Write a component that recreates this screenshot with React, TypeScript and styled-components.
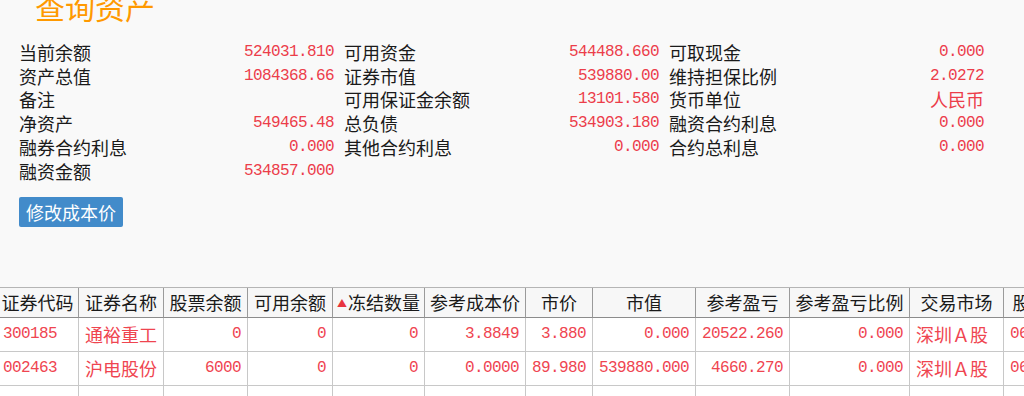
import React from "react";
import styled, { createGlobalStyle } from "styled-components";

interface InfoItem {
  label: string;
  value: string;
  cjk?: boolean;
}

interface Holding {
  code: string;
  name: string;
  balance: string;
  available: string;
  frozen: string;
  cost: string;
  price: string;
  marketValue: string;
  profit: string;
  profitRate: string;
  market: string;
  holder: string;
}

// Asset summary, laid out row by row (three columns per row)
const infoRows: (InfoItem | null)[][] = [
  [
    { label: "当前余额", value: "524031.810" },
    { label: "可用资金", value: "544488.660" },
    { label: "可取现金", value: "0.000" },
  ],
  [
    { label: "资产总值", value: "1084368.66" },
    { label: "证券市值", value: "539880.00" },
    { label: "维持担保比例", value: "2.0272" },
  ],
  [
    { label: "备注", value: "" },
    { label: "可用保证金余额", value: "13101.580" },
    { label: "货币单位", value: "人民币", cjk: true },
  ],
  [
    { label: "净资产", value: "549465.48" },
    { label: "总负债", value: "534903.180" },
    { label: "融资合约利息", value: "0.000" },
  ],
  [
    { label: "融券合约利息", value: "0.000" },
    { label: "其他合约利息", value: "0.000" },
    { label: "合约总利息", value: "0.000" },
  ],
  [{ label: "融资金额", value: "534857.000" }, null, null],
];

const columns: { title: string; width: number; sorted?: boolean }[] = [
  { title: "证券代码", width: 82 },
  { title: "证券名称", width: 85 },
  { title: "股票余额", width: 84 },
  { title: "可用余额", width: 85 },
  { title: "冻结数量", width: 92, sorted: true },
  { title: "参考成本价", width: 101 },
  { title: "市价", width: 67 },
  { title: "市值", width: 103 },
  { title: "参考盈亏", width: 94 },
  { title: "参考盈亏比例", width: 120 },
  { title: "交易市场", width: 94 },
  { title: "股东代码", width: 90 },
];

const tableWidth = columns.reduce((sum, col) => sum + col.width, 0);

const holdings: Holding[] = [
  {
    code: "300185",
    name: "通裕重工",
    balance: "0",
    available: "0",
    frozen: "0",
    cost: "3.8849",
    price: "3.880",
    marketValue: "0.000",
    profit: "20522.260",
    profitRate: "0.000",
    market: "深圳Ａ股",
    holder: "0603218876",
  },
  {
    code: "002463",
    name: "沪电股份",
    balance: "6000",
    available: "0",
    frozen: "0",
    cost: "0.0000",
    price: "89.980",
    marketValue: "539880.000",
    profit: "4660.270",
    profitRate: "0.000",
    market: "深圳Ａ股",
    holder: "0603218876",
  },
];

const App: React.FC = () => {
  return (
    <>
      <GlobalStyle />
      <Page>
        <Title>查询资产</Title>
        <InfoGrid>
          {infoRows.map((row, r) =>
            row.map((item, c) =>
              item ? (
                <InfoCell key={`${r}-${c}`}>
                  <Label>{item.label}</Label>
                  <Value $cjk={item.cjk}>{item.value}</Value>
                </InfoCell>
              ) : (
                <InfoCell key={`${r}-${c}`} />
              )
            )
          )}
        </InfoGrid>
        <EditButton>修改成本价</EditButton>

        <TableWrap>
          <Table $w={tableWidth}>
            <colgroup>
              {columns.map((col) => (
                <Col key={col.title} $w={col.width} />
              ))}
            </colgroup>
            <thead>
              <tr>
                {columns.map((col) => (
                  <Th key={col.title}>
                    {col.sorted && <SortMark>▲</SortMark>}
                    {col.title}
                  </Th>
                ))}
              </tr>
            </thead>
            <tbody>
              {holdings.map((h) => (
                <tr key={h.code}>
                  <Td $num $left>{h.code}</Td>
                  <Td $left>{h.name}</Td>
                  <Td $num>{h.balance}</Td>
                  <Td $num>{h.available}</Td>
                  <Td $num>{h.frozen}</Td>
                  <Td $num>{h.cost}</Td>
                  <Td $num>{h.price}</Td>
                  <Td $num>{h.marketValue}</Td>
                  <Td $num>{h.profit}</Td>
                  <Td $num>{h.profitRate}</Td>
                  <Td $left>{h.market}</Td>
                  <Td $num $left>{h.holder}</Td>
                </tr>
              ))}
              <tr>
                {columns.map((col) => (
                  <Td key={col.title} />
                ))}
              </tr>
            </tbody>
          </Table>
        </TableWrap>
      </Page>
    </>
  );
};

export default App;

// Styles
const GlobalStyle = createGlobalStyle`
  html, body {
    margin: 0;
    padding: 0;
    background: #f9f9f9;
    overflow: hidden;
  }
  body {
    font-family: "Noto Sans CJK SC", "Noto Sans", sans-serif;
    color: #222;
  }
`;

const Page = styled.div`
  width: 1024px;
  height: 396px;
  overflow: hidden;
`;

const Title = styled.h1`
  margin: -9px 0 0 35px;
  font-size: 30px;
  line-height: 30px;
  font-weight: 400;
  color: #ff9900;
`;

const InfoGrid = styled.div`
  display: grid;
  grid-template-columns: repeat(3, 325px);
  grid-auto-rows: 23.8px;
  margin: 19px 0 0 19px;
`;

const InfoCell = styled.div`
  display: flex;
  align-items: center;
  justify-content: space-between;
  padding-right: 10px;
`;

const Label = styled.span`
  font-size: 18px;
  line-height: 20px;
  color: #1a1a1a;
`;

const Value = styled.span<{ $cjk?: boolean }>`
  font-family: ${(p) =>
    p.$cjk ? `"Noto Sans CJK SC", sans-serif` : `"Liberation Mono", monospace`};
  font-size: ${(p) => (p.$cjk ? "18px" : "16px")};
  letter-spacing: ${(p) => (p.$cjk ? "0" : "-0.6px")};
  line-height: 20px;
  color: #ec3d4a;
`;

const EditButton = styled.button`
  display: block;
  margin: 14px 0 0 19px;
  height: 30px;
  padding: 0 7px;
  border: none;
  border-radius: 2px;
  background: #428bca;
  color: #fff;
  font-family: "Noto Sans CJK SC", sans-serif;
  font-size: 18px;
  line-height: 30px;
  cursor: pointer;
`;

const TableWrap = styled.div`
  margin: 60px 0 0 -3px;
`;

const Table = styled.table<{ $w: number }>`
  width: ${(p) => p.$w}px;
  table-layout: fixed;
  border-collapse: separate;
  border-spacing: 0;
  border-top: 1px solid #b5b5b5;
`;

const Col = styled.col<{ $w: number }>`
  width: ${(p) => p.$w}px;
`;

const Th = styled.th`
  height: 30px;
  padding: 0 2px;
  box-sizing: border-box;
  border-right: 1px solid #9a9a9a;
  border-bottom: 1px solid #8c8c8c;
  background: #f7f7f7;
  font-size: 18px;
  font-weight: 400;
  color: #1a1a1a;
  text-align: center;
  white-space: nowrap;
  overflow: hidden;
`;

const SortMark = styled.span`
  font-size: 10px;
  color: #e8343f;
  vertical-align: 3px;
  margin-right: 1px;
`;

const Td = styled.td<{ $num?: boolean; $left?: boolean }>`
  height: 34px;
  padding: 0 6px;
  box-sizing: border-box;
  border-right: 1px solid #c8c8c8;
  border-bottom: 1px solid #c8c8c8;
  background: #fff;
  font-family: ${(p) =>
    p.$num ? `"Liberation Mono", monospace` : `"Noto Sans CJK SC", sans-serif`};
  font-size: ${(p) => (p.$num ? "16px" : "18px")};
  letter-spacing: ${(p) => (p.$num ? "-0.6px" : "0")};
  color: #ef4550;
  text-align: ${(p) => (p.$left ? "left" : "right")};
  white-space: nowrap;
  overflow: hidden;
`;
